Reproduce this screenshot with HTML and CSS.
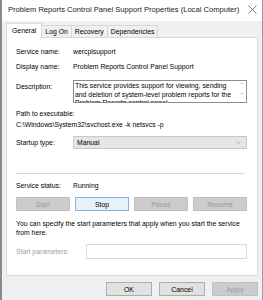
FILE: index.html
```html
<!DOCTYPE html>
<html lang="en">
<head>
  <meta charset="UTF-8" />
  <title>Problem Reports Control Panel Support Properties</title>
  <link rel="stylesheet" href="styles.css">
</head>
<body>
  <div class="window">
    <div class="titlebar">
      <span class="title">Problem Reports Control Panel Support Properties (Local Computer)</span>
      <svg class="close" width="9" height="9" viewBox="0 0 9 9">
        <path d="M0.5 0.5 L8.5 8.5 M8.5 0.5 L0.5 8.5" stroke="#555" stroke-width="0.8" fill="none"/>
      </svg>
    </div>

    <div class="body">
      <div class="tabs">
        <div class="tab active">General</div>
        <div class="tab">Log On</div>
        <div class="tab">Recovery</div>
        <div class="tab">Dependencies</div>
      </div>

      <div class="panel">
        <div class="row name-row">
          <span class="label">Service name:</span>
          <span>wercplsupport</span>
        </div>
        <div class="row display-row">
          <span class="label">Display name:</span>
          <span>Problem Reports Control Panel Support</span>
        </div>
        <div class="row desc-row">
          <span class="label">Description:</span>
          <div class="desc-box">
            <p>This service provides support for viewing, sending and deletion of system-level problem reports for the Problem Reports control panel.</p>
            <div class="scroll">
              <span>&#710;</span>
              <span>&#711;</span>
            </div>
          </div>
        </div>
        <div class="path-label">Path to executable:</div>
        <div class="path">C:\Windows\System32\svchost.exe -k netsvcs -p</div>
        <div class="row startup-row">
          <span class="label">Startup type:</span>
          <div class="select">
            <span>Manual</span>
            <svg width="5" height="3" viewBox="0 0 5 3">
              <path d="M0.5 0.5 L2.5 2.5 L4.5 0.5" stroke="#777" stroke-width="0.6" fill="none"/>
            </svg>
          </div>
        </div>
        <div class="separator"></div>
        <div class="row status-row">
          <span class="label">Service status:</span>
          <span>Running</span>
        </div>
        <div class="service-buttons">
          <button class="btn disabled">Start</button>
          <button class="btn focused">Stop</button>
          <button class="btn disabled">Pause</button>
          <button class="btn disabled">Resume</button>
        </div>
        <p class="hint">You can specify the start parameters that apply when you start the service from here.</p>
        <div class="row params-row">
          <span class="label muted">Start parameters:</span>
          <div class="input"></div>
        </div>
      </div>

      <div class="actions">
        <button class="btn">OK</button>
        <button class="btn">Cancel</button>
        <button class="btn disabled">Apply</button>
      </div>
    </div>
  </div>
</body>
</html>
```

FILE: styles.css
```css
* {
  margin: 0;
  padding: 0;
  box-sizing: border-box;
}
body {
  background: #f0f0f0;
  font-family: 'Liberation Sans', Arial, sans-serif;
  font-size: 6.85px;
  color: #000;
  overflow: hidden;
}
.window {
  width: 263px;
  height: 300px;
  background: #f0f0f0;
  border-left: 2px solid #8a8a8a;
  border-right: 1px solid #9a9a9a;
}
.titlebar {
  height: 21px;
  background: #fff;
  display: flex;
  align-items: center;
  justify-content: space-between;
  padding: 0 5px 2px 6px;
}
.title {
  font-size: 7.6px;
  color: #1a1a1a;
}
.body {
  padding: 2px 4px 0 4px;
}

/* tabs */
.tabs {
  display: flex;
  align-items: flex-end;
  height: 14px;
  position: relative;
  z-index: 1;
}
.tab {
  height: 12px;
  line-height: 11px;
  padding: 0 3px;
  background: #f0f0f0;
  border: 1px solid #d9d9d9;
  border-bottom: none;
  margin-left: -1px;
}
.tab.active {
  height: 15px;
  line-height: 13px;
  margin-bottom: -1px;
  margin-left: 0;
  padding: 0 5px;
  background: #fff;
}

.panel {
  background: #fff;
  border: 1px solid #d9d9d9;
  padding: 8px 10px 16px 9px;
}
.row {
  display: flex;
  align-items: center;
  line-height: 12px;
}
.label {
  width: 57px;
  flex-shrink: 0;
}
.muted {
  color: #a0a0a0;
  width: 70px;
}
.display-row {
  margin-top: 3px;
}
.desc-row {
  margin-top: 7px;
  align-items: flex-start;
}
.desc-row .label {
  padding-top: 1px;
}
.desc-box {
  flex: 1;
  height: 23px;
  border: 1px solid #8c8c8c;
  display: flex;
  overflow: hidden;
}
.desc-box p {
  flex: 1;
  line-height: 8.5px;
  padding: 1px 0 0 1px;
}
.scroll {
  width: 8px;
  display: flex;
  flex-direction: column;
  align-items: center;
  color: #888;
  font-size: 7px;
  line-height: 10px;
}
.path-label {
  margin-top: 5px;
  line-height: 11px;
}
.path {
  line-height: 11px;
}
.startup-row {
  margin-top: 6px;
}
.select {
  flex: 1;
  height: 13px;
  background: #e5e5e5;
  border: 1px solid #c8c8c8;
  display: flex;
  align-items: center;
  justify-content: space-between;
  padding: 0 5px 0 3px;
}
.separator {
  margin-top: 24px;
  height: 1px;
  background: #d6d6d6;
  margin-right: 3px;
}
.status-row {
  margin-top: 6px;
}
.service-buttons {
  margin-top: 5px;
  display: flex;
  gap: 5px;
}
.btn {
  height: 14px;
  width: 54px;
  font: inherit;
  color: #000;
  background: #e1e1e1;
  border: 1px solid #adadad;
}
.btn.disabled {
  background: #cccccc;
  border-color: #bfbfbf;
  color: #9a9a9a;
}
.btn.focused {
  background: #e5f1fb;
  border-color: #7fb4e3;
}
.hint {
  margin-top: 9px;
  line-height: 8.5px;
  margin-right: -4px;
}
.params-row {
  margin-top: 7px;
}
.input {
  flex: 1;
  height: 15px;
  border: 1px solid #d9d9d9;
  background: #fff;
}

.actions {
  display: flex;
  justify-content: flex-end;
  gap: 7px;
  margin-top: 6px;
  padding-right: 0;
}
.actions .btn {
  width: 46px;
}
```
